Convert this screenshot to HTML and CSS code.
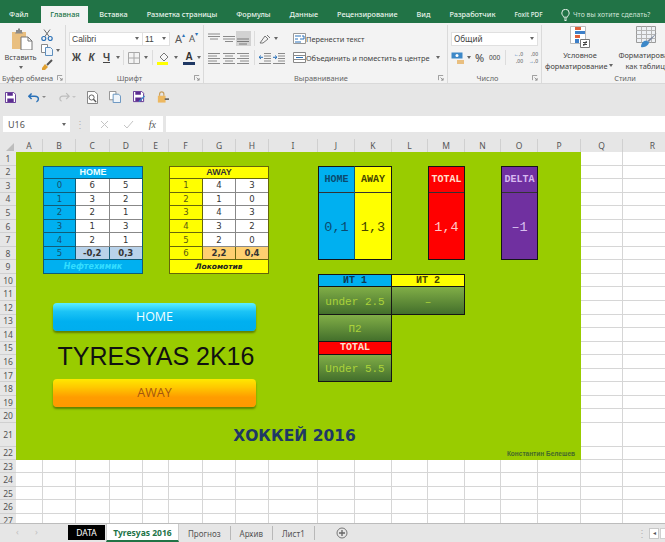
FILE: index.html
```html
<!DOCTYPE html>
<html lang="ru">
<head>
<meta charset="utf-8">
<title>Tyresyas 2016</title>
<link rel="stylesheet" href="styles.css">
</head>
<body>
<svg class="defs" aria-hidden="true">
  <symbol id="al-top" viewBox="0 0 14 14"><path d="M1 2h12M1 4.500h12M3 7h8" stroke="#8a8a8a" fill="none"/></symbol>
  <symbol id="al-mid" viewBox="0 0 14 14"><path d="M1 4.500h12M1 7h12M3 9.500h8" stroke="#8a8a8a" fill="none"/></symbol>
  <symbol id="al-bot" viewBox="0 0 14 14"><path d="M1 7h12M1 9.500h12M3 12h8" stroke="#7a7a7a" fill="none"/></symbol>
  <symbol id="al-l" viewBox="0 0 14 14"><path d="M1 2.500h12M1 5h9M1 7.500h12M1 10h9M1 12.500h12" stroke="#8a8a8a" fill="none"/></symbol>
  <symbol id="al-c" viewBox="0 0 14 14"><path d="M1 2.500h12M3 5h8M1 7.500h12M3 10h8M1 12.500h12" stroke="#8a8a8a" fill="none"/></symbol>
  <symbol id="al-r" viewBox="0 0 14 14"><path d="M1 2.500h12M4 5h9M1 7.500h12M4 10h9M1 12.500h12" stroke="#8a8a8a" fill="none"/></symbol>
  <symbol id="launch" viewBox="0 0 7 7"><path d="M.5 6V.5H6M3 3l3 3M6 3.500V6H3.500" stroke="#8a8a8a" fill="none"/></symbol>
</svg>

<header class="titlebar">
  <span class="tab">Файл</span>
  <span class="tab active">Главная</span>
  <span class="tab">Вставка</span>
  <span class="tab">Разметка страницы</span>
  <span class="tab">Формулы</span>
  <span class="tab">Данные</span>
  <span class="tab">Рецензирование</span>
  <span class="tab">Вид</span>
  <span class="tab">Разработчик</span>
  <span class="tab foxit">Foxit PDF</span>
  <span class="tab tell">
    <svg width="9" height="12" viewBox="0 0 9 12"><path d="M2.700 8.200C2.400 6.800.8 6 .8 4A3.700 3.700 0 0 1 8.200 4c0 2-1.600 2.800-1.900 4.200zM3 10h3M3.500 11.500h2" fill="none" stroke="#e8f3ec"/></svg>
    Что вы хотите сделать?
  </span>
</header>

<section class="ribbon">
  <div class="group g-clip">
    <div class="body clip-body">
      <div class="paste">
        <svg width="22" height="22" viewBox="0 0 22 22"><path d="M1 4h14v17H1z" fill="#e9bf80"/><path d="M5 4V2h2V.5h2V2h2v2l1 1.500H4z" fill="#8a8a8a"/><path d="M10 9h7l4 4v9H10z" fill="#fff" stroke="#777"/><path d="M17 9v4h4" fill="none" stroke="#777"/></svg>
        <span class="paste-text">Вставить</span>
        <span class="caret"></span>
      </div>
      <div class="clip-tools">
        <svg width="12" height="12" viewBox="0 0 12 12"><path d="M3 .5l5.500 7.500M9 .5L3.500 8" stroke="#6d6d6d" fill="none"/><circle cx="2.800" cy="9.500" r="2" fill="none" stroke="#2a71b8" stroke-width="1.200"/><circle cx="9.200" cy="9.500" r="2" fill="none" stroke="#2a71b8" stroke-width="1.200"/></svg>
        <span class="row-i"><svg width="12" height="12" viewBox="0 0 12 12"><path d="M.5.500h6v8h-6z" fill="#fff" stroke="#8a8a8a"/><path d="M4.500 3.500h5l2 2v6h-7z" fill="#eef4fa" stroke="#5f8fbd"/></svg><span class="caret"></span></span>
        <svg width="12" height="12" viewBox="0 0 12 12"><path d="M6 6l5-5" stroke="#555" stroke-width="2"/><path d="M1 9l3-4 3 3-3 3H1z" fill="#e0a030"/></svg>
      </div>
    </div>
    <div class="label label-clip"><span>Буфер обмена</span><svg class="launch"><use href="#launch"/></svg></div>
  </div>

  <div class="group g-font">
    <div class="body">
      <div class="line">
        <span class="combo combo-font">Calibri<span class="caret"></span></span>
        <span class="combo combo-size">11<span class="caret"></span></span>
        <span class="grow-a">A<sup>▴</sup></span>
        <span class="grow-a small">A<sup>▾</sup></span>
      </div>
      <div class="line line-2">
        <b class="fmt">Ж</b><b class="fmt italic">К</b><b class="fmt under">Ч</b><span class="caret"></span>
        <span class="sep sep-a"></span>
        <svg class="ico-b" width="12" height="12" viewBox="0 0 12 12"><path d="M.5.500h11v11H.500zM6 .5v11M.5 6h11" fill="none" stroke="#a8a8a8"/></svg><span class="caret"></span>
        <span class="sep sep-b"></span>
        <svg class="ico-f" width="13" height="14" viewBox="0 0 13 14"><path d="M3 6l4-4 4 4-4 4z" fill="#f7f7f7" stroke="#777"/><path d="M0 11h11v3H0z" fill="#ffff00"/></svg><span class="caret"></span>
        <span class="font-a">A</span><span class="caret"></span>
      </div>
    </div>
    <div class="label label-font"><span>Шрифт</span><svg class="launch"><use href="#launch"/></svg></div>
  </div>

  <div class="group g-align">
    <div class="body align-body">
      <div class="align-left">
        <div class="line">
          <svg class="al"><use href="#al-top"/></svg><svg class="al"><use href="#al-mid"/></svg><span class="al-on"><svg class="al"><use href="#al-bot"/></svg></span>
          <span class="sep sep-c"></span>
          <svg class="al" viewBox="0 0 14 14"><path d="M2 11l5-7 3 3-5 4zM9 3l3 3" fill="none" stroke="#777"/></svg><span class="caret"></span>
        </div>
        <div class="line line-2">
          <svg class="al"><use href="#al-l"/></svg><svg class="al"><use href="#al-c"/></svg><svg class="al"><use href="#al-r"/></svg>
          <span class="sep sep-c"></span>
          <svg class="al" viewBox="0 0 14 14"><path d="M6 2.500h7M6 5h7M6 7.500h7M6 10h7M1 12.500h12" stroke="#8a8a8a" fill="none"/><path d="M5 6.300H1M3 4.500L1 6.300 3 8" stroke="#2a71b8" fill="none"/></svg>
          <svg class="al" viewBox="0 0 14 14"><path d="M6 2.500h7M6 5h7M6 7.500h7M6 10h7M1 12.500h12" stroke="#8a8a8a" fill="none"/><path d="M1 6.300h4M3 4.500l2 1.800L3 8" stroke="#2a71b8" fill="none"/></svg>
        </div>
      </div>
      <div class="align-right">
        <div class="line wide">
          <svg width="13" height="13" viewBox="0 0 13 13"><path d="M.5 1.500h12v10H.5z" fill="#fff" stroke="#999"/><path d="M2 4h6M2 7h3M2 10h6" stroke="#2a71b8"/><path d="M9 4h2v3H7" fill="none" stroke="#2a71b8"/></svg>
          <span>Перенести текст</span>
        </div>
        <div class="line wide line-2">
          <svg width="13" height="13" viewBox="0 0 13 13"><path d="M.5 1.500h12v10H.5zM.5 4.500h12M.5 8.500h12" fill="#fff" stroke="#888"/><path d="M3 6.500h7" stroke="#2a71b8"/></svg>
          <span>Объединить и поместить в центре</span><span class="caret caret-merge"></span>
        </div>
      </div>
    </div>
    <div class="label label-align"><span>Выравнивание</span><svg class="launch"><use href="#launch"/></svg></div>
  </div>

  <div class="group g-num">
    <div class="body">
      <div class="line"><span class="combo combo-num">Общий<span class="caret"></span></span></div>
      <div class="line line-2 num-row">
        <svg width="14" height="14" viewBox="0 0 14 14"><path d="M.5 1.500h11v6H.5z" fill="#3d88c8"/><circle cx="6" cy="4.500" r="1.500" fill="#fff"/><path d="M6 9h7v4H6z" fill="#e9bf80"/></svg><span class="caret"></span>
        <span class="pct">%</span><span class="thou">000</span>
        <span class="sep sep-d"></span>
        <span class="dec"><i>←</i>,0<br>,00</span>
        <span class="dec">,00<br><i>→</i>,0</span>
      </div>
    </div>
    <div class="label label-num"><span>Число</span><svg class="launch"><use href="#launch"/></svg></div>
  </div>

  <div class="group g-style">
    <div class="body style-body">
      <div class="big big-cond">
        <svg width="20" height="22" viewBox="0 0 20 22"><path d="M.5.500h15v17H.5z" fill="#fff" stroke="#bbb"/><path d="M5 1h6v3H5z" fill="#e0603a"/><path d="M5 5h10v3H5z" fill="#3d7fc8"/><path d="M5 9h5v3H5z" fill="#e0603a"/><path d="M5 13h4v4H5z" fill="#3d7fc8"/><path d="M10.500 13.500h9v8h-9z" fill="#fff" stroke="#777"/><path d="M13 18.500h4M13 16.500h4M16.500 15l-3 5" stroke="#444" fill="none"/></svg>
        <span class="big-t">Условное</span>
        <span class="big-t">форматирование<span class="caret caret-inline"></span></span>
      </div>
      <div class="big big-table">
        <svg width="22" height="22" viewBox="0 0 22 22"><path d="M.5.500h19v16H.5z" fill="#eef1f5" stroke="#9a9a9a"/><path d="M.5 4.500h19M.5 8.500h19M.5 12.500h19M5.500.5v16M10.500.5v16M15.500.5v16" stroke="#b5b5b5" fill="none"/><path d="M21 7l-8 9-2-1z" fill="#7d8aa0"/><path d="M5 21c0-4 3-7 6-6l2 1c0 3-4 6-8 5z" fill="#3d88c8"/></svg>
        <span class="big-t">Форматировать</span>
        <span class="big-t">как таблицу</span>
      </div>
    </div>
    <div class="label label-style"><span>Стили</span></div>
  </div>
</section>

<section class="qat">
  <svg width="11" height="11" viewBox="0 0 12 12"><path d="M.5.500h9l2 2v9H.5z" fill="#fff" stroke="#5c2d91"/><path d="M2.500 1h6v3h-6zM2.500 7h7v4h-7z" fill="#5c2d91"/></svg>
  <span class="q-undo"><svg width="12" height="11" viewBox="0 0 15 12"><path d="M4.500 1L1 4.500 4.500 8M1.500 4.500h7c3 0 4.500 2 4.500 3.500s-1 3-2.500 3.500" fill="none" stroke="#2a71b8" stroke-width="1.800"/></svg><span class="caret caret-q"></span></span>
  <span class="q-redo"><svg width="11" height="10" viewBox="0 0 13 11"><path d="M8.500 1L12 4.500 8.500 8M11.500 4.500h-7C2 4.500 1 6.500 1 8s1 2 2 2.500" fill="none" stroke="#bdbdbd" stroke-width="1.400"/></svg><span class="caret caret-q caret-pale"></span></span>
  <svg class="q-prev" width="11" height="13" viewBox="0 0 12 14"><path d="M.5.500h8l3 3v10H.5z" fill="#fff" stroke="#777"/><circle cx="5" cy="7" r="2.800" fill="none" stroke="#555"/><path d="M7 9l3 3" stroke="#555" stroke-width="1.500"/></svg>
  <svg class="q-copy" width="12" height="12" viewBox="0 0 13 13"><path d="M.5.500h7v9h-7z" fill="#fff" stroke="#8a8a8a"/><path d="M4.500 3.500h6l2 2v7h-8z" fill="#eef4fa" stroke="#5f8fbd"/></svg>
  <svg class="q-saveas" width="12" height="12" viewBox="0 0 13 13"><path d="M.5.500h9l2 2v9H.5z" fill="#fff" stroke="#5c2d91"/><path d="M2.500 1h6v3h-6zM2.500 7h7v4h-7z" fill="#5c2d91"/><path d="M6 11l6-6 1 1-6 6z" fill="#3d88c8"/></svg>
  <svg class="q-lock" width="12" height="12" viewBox="0 0 14 13"><path d="M1 5h9v8H1z" fill="#edb860"/><path d="M3 5V3a2.500 2.500 0 0 1 5 0v2" fill="none" stroke="#c8a060" stroke-width="1.400"/><path d="M9 9h5" stroke="#666" stroke-width="2"/></svg>
</section>

<section class="fbar">
  <div class="namebox"><span>U16</span><span class="caret"></span></div>
  <span class="fdots">⋮</span>
  <div class="fbtns">
    <svg width="9" height="9" viewBox="0 0 9 9"><path d="M1 1l7 7M8 1L1 8" stroke="#c4c4c4" fill="none"/></svg>
    <svg width="11" height="9" viewBox="0 0 11 9"><path d="M1 5l3 3 6-7" stroke="#c4c4c4" fill="none"/></svg>
    <i class="fx">fx</i>
  </div>
  <div class="finput"></div>
</section>

<main class="sheet">
  <div class="gl-v"><i></i><i></i><i></i><i></i><i></i><i></i><i></i><i></i><i></i><i></i><i></i><i></i><i></i><i></i><i></i><i></i><i></i><i></i></div>
  <div class="gl-h"><i></i><i></i><i></i><i></i><i></i><i></i><i></i><i></i><i></i><i></i><i></i><i></i><i></i><i></i><i></i><i></i><i></i><i></i><i></i><i></i><i></i><i></i><i></i><i></i><i></i><i></i><i></i></div>

  <div class="corner"><span></span></div>
  <div class="cols"><span>A</span><span>B</span><span>C</span><span>D</span><span>E</span><span>F</span><span>G</span><span>H</span><span>I</span><span>J</span><span>K</span><span>L</span><span>M</span><span>N</span><span>O</span><span>P</span><span>Q</span><span>R</span></div>
  <div class="rows"><span>1</span><span>2</span><span>3</span><span>4</span><span>5</span><span>6</span><span>7</span><span>8</span><span>9</span><span>10</span><span>11</span><span>12</span><span>13</span><span>14</span><span>15</span><span>16</span><span>17</span><span>18</span><span>19</span><span>20</span><span>21</span><span>22</span><span>23</span><span>24</span><span>25</span><span>26</span><span>27</span></div>

  <div class="field"></div>

  <div class="tbl tbl-home">
    <div class="th">HOME</div>
    <div class="k">0</div><div class="v">6</div><div class="v">5</div>
    <div class="k">1</div><div class="v">3</div><div class="v">2</div>
    <div class="k">2</div><div class="v">2</div><div class="v">1</div>
    <div class="k">3</div><div class="v">1</div><div class="v">3</div>
    <div class="k">4</div><div class="v">2</div><div class="v">1</div>
    <div class="k">5</div><div class="s">-0,2</div><div class="s">0,3</div>
    <div class="tf">Нефтехимик</div>
  </div>

  <div class="tbl tbl-away">
    <div class="th">AWAY</div>
    <div class="k">1</div><div class="v">4</div><div class="v">3</div>
    <div class="k">2</div><div class="v">1</div><div class="v">0</div>
    <div class="k">3</div><div class="v">4</div><div class="v">3</div>
    <div class="k">4</div><div class="v">3</div><div class="v">2</div>
    <div class="k">5</div><div class="v">2</div><div class="v">0</div>
    <div class="k">6</div><div class="s">2,2</div><div class="s">0,4</div>
    <div class="tf">Локомотив</div>
  </div>

  <div class="stat st-home"><div class="st-h">HOME</div><div class="st-v">0,1</div></div>
  <div class="stat st-away"><div class="st-h">AWAY</div><div class="st-v">1,3</div></div>
  <div class="stat st-total"><div class="st-h">TOTAL</div><div class="st-v">1,4</div></div>
  <div class="stat st-delta"><div class="st-h">DELTA</div><div class="st-v">–1</div></div>

  <div class="pick hd-blue p-it1">ИТ 1</div>
  <div class="pick hd-yellow p-it2">ИТ 2</div>
  <div class="pick res p-under">under 2.5</div>
  <div class="pick res p-dash">–</div>
  <div class="pick res p-p2">П2</div>
  <div class="pick hd-red p-total">TOTAL</div>
  <div class="pick res p-over">Under 5.5</div>

  <div class="hockey">ХОККЕЙ 2016</div>
  <div class="author">Константин Белешев</div>

  <div class="shape btn-home">HOME</div>
  <div class="shape brand">TYRESYAS 2K16</div>
  <div class="shape btn-away">AWAY</div>
</main>

<footer class="tabsbar">
  <span class="nav">‹</span><span class="nav">›</span>
  <span class="st st-data">DATA</span>
  <span class="st st-on">Tyresyas 2016</span>
  <span class="st">Прогноз</span>
  <span class="st">Архив</span>
  <span class="st">Лист1</span>
  <svg class="plus" width="12" height="12" viewBox="0 0 12 12"><circle cx="6" cy="6" r="5" fill="none" stroke="#777"/><path d="M3 6h6M6 3v6" stroke="#666" stroke-width="1.300"/></svg>
  <span class="tab-end">
    <span class="fdots">⋮</span>
    <span class="hscroll">◂</span>
    <span class="hthumb"></span>
  </span>
</footer>
</body>
</html>
```

FILE: styles.css
```css
* { box-sizing: border-box; }
html, body { margin: 0; width: 665px; height: 542px; overflow: hidden; }
body {
  display: flex;
  flex-direction: column;
  font-family: "Noto Sans", "Open Sans", sans-serif;
  font-size: 7.400px;
  color: #444;
  background: #e6e6e6;
}
.defs { width: 0; height: 0; position: absolute; }

/* title bar */
.titlebar {
  height: 23px;
  flex: none;
  background: #217346;
  display: flex;
  align-items: flex-end;
  white-space: nowrap;
  overflow: hidden;
}
.tab { height: 17px; line-height: 17px; color: #e8f3ec; padding: 0 9.500px; font-weight: 500; font-size: 7.300px; }
.tab:first-child { padding: 0 12px 0 9px; margin-right: 1px; }
.tab.active { background: #f3f3f3; color: #217346; padding: 0 9px; margin-right: 1.500px; width: 47px; }
.foxit { font-size: 6.300px; }
.tell { display: inline-flex; align-items: center; gap: 3px; color: #cfe3d7; padding: 0 0 0 9px; font-size: 6.900px; font-weight: 400; }

/* ribbon */
.ribbon {
  height: 61px;
  flex: none;
  display: flex;
  background: #f3f3f3;
  border-bottom: 1px solid #d9d9d9;
  overflow: hidden;
}
.group {
  display: flex;
  flex-direction: column;
  flex: none;
  border-right: 1px solid #dadada;
  margin-top: 2px;
}
.body { height: 48px; padding: 6px 0 0 3px; }
.label {
  height: 10px;
  line-height: 10px;
  display: flex;
  align-items: center;
  justify-content: center;
  position: relative;
  color: #666;
  white-space: nowrap;
}
.launch { width: 6px; height: 6px; position: absolute; right: 3px; top: 2px; }
.g-clip { width: 66px; }
.g-font { width: 138px; }
.g-align { width: 244px; }
.g-num { width: 94px; }
.g-style { width: 140px; border-right: 0; }
.label-clip { justify-content: flex-start; padding-left: 2px; }
.label-font { padding-right: 10px; }
.label-num { padding-right: 14px; }
.label-style { padding-left: 26px; }
.label-align { justify-content: flex-start; padding-left: 90px; }
.label-clip .launch { right: 2px; }

.line { display: flex; align-items: center; height: 15px; }
.line-2 { margin-top: 4px; }
.caret {
  display: inline-block;
  width: 0;
  height: 0;
  border-left: 2.500px solid transparent;
  border-right: 2.500px solid transparent;
  border-top: 3px solid #666;
  flex: none;
  margin: 0 1.500px;
}
.sep { width: 1px; height: 15px; background: #dcdcdc; flex: none; }

/* clipboard */
.clip-body { display: flex; padding-top: 3px; padding-left: 0; }
.paste { width: 41px; display: flex; flex-direction: column; align-items: center; }
.paste svg { margin-left: 3px; }
.paste-text { line-height: 11px; margin-top: 2px; }
.paste .caret { margin-top: 3px; }
.clip-tools { display: flex; flex-direction: column; gap: 3px; padding-top: 1px; }
.row-i { display: flex; align-items: center; gap: 1px; }

/* font group */
.combo {
  height: 14px;
  background: #fff;
  border: 1px solid #e0e0e0;
  display: flex;
  align-items: center;
  justify-content: space-between;
  padding: 0 2px;
  flex: none;
}
.combo-font { width: 74px; font-family: "Liberation Sans", sans-serif; font-size: 8.500px; }
.combo-size { width: 28px; margin-left: -1px; font-family: "Liberation Sans", sans-serif; font-size: 8.500px; }
.combo-num { width: 87px; font-size: 8.200px; }
.grow-a { font-size: 11px; margin-left: 5px; width: 14px; line-height: 1; color: #555; }
.grow-a sup { font-size: 6px; color: #2a71b8; vertical-align: 6px; line-height: 0; }
.grow-a.small { font-size: 9.500px; margin-left: 0; }
.fmt {
  width: 15px;
  text-align: center;
  font-family: "Liberation Sans", sans-serif;
  font-size: 10px;
  color: #444;
  flex: none;
}
.italic { font-style: italic; }
.under { text-decoration: underline; }
.sep-a { margin: 0 4px 0 2px; }
.sep-b { margin: 0 4px 0 3px; }
.ico-b { margin-right: 2px; }
.ico-f { margin-right: 2px; }
.font-a {
  margin-left: 4px;
  width: 12px;
  text-align: center;
  font: bold 10px/11px "Liberation Sans", sans-serif;
  border-bottom: 3px solid #1f3864;
  color: #333;
  height: 14px;
}

/* alignment */
.align-body { display: flex; }
.align-left { width: 84px; flex: none; }
.al { width: 14px; height: 14px; flex: none; margin-right: .5px; }
.al-on { width: 15px; height: 15px; background: #d2d2d2; display: flex; align-items: center; justify-content: center; }
.sep-c { margin: 0 3px; }
.wide { white-space: nowrap; color: #444; }
.align-right { padding-left: 2px; }
.caret-merge { margin-left: 6px; }

/* number */
.pct { font-size: 11px; margin-left: 3px; width: 13px; }
.thou { font-size: 6.500px; margin-left: 1px; width: 15px; }
.sep-d { margin: 0 3px 0 1px; }
.dec {
  width: 14px;
  font-size: 5px;
  line-height: 7px;
  color: #555;
  text-align: right;
  margin-right: 1px;
  white-space: nowrap;
}
.dec i { font-style: normal; color: #2a71b8; }

/* styles */
.style-body { display: flex; padding: 1px 0 0; }
.big {
  width: 72px;
  display: flex;
  flex-direction: column;
  align-items: center;
  flex: none;
  line-height: 11px;
  white-space: nowrap;
}
.big-cond { margin-left: 2px; }
.big-table { width: 68px; margin-left: -3px; }
.big svg { margin-bottom: 2px; }
.big-t { display: block; }
.caret-inline { margin-left: 2px; vertical-align: 2px; }

/* quick access */
.qat {
  height: 26px;
  flex: none;
  display: flex;
  align-items: center;
  padding-left: 5px;
  background: #e6e6e6;
}
.q-undo { display: flex; align-items: center; margin-left: 12px; }
.q-redo { display: flex; align-items: center; margin-left: 11px; }
.caret-q { border-left-width: 2px; border-right-width: 2px; border-top: 2px solid #888; margin-left: 2px; }
.caret-pale { border-top-color: #c4c4c4; }
.q-prev { margin-left: 10px; }
.q-copy { margin-left: 11px; }
.q-saveas { margin-left: 12px; }
.q-lock { margin-left: 12px; }

/* formula bar */
.fbar {
  height: 29px;
  flex: none;
  display: flex;
  align-items: flex-start;
  padding: 6px 0 0 3px;
  background: #e6e6e6;
}
.namebox {
  width: 67px;
  height: 16px;
  background: #fff;
  display: flex;
  align-items: center;
  justify-content: space-between;
  padding: 0 3px 0 5px;
  color: #555;
  font-size: 9px;
}
.fdots { color: #b5b5b5; width: 20px; text-align: center; line-height: 16px; font-size: 10px; }
.fbtns {
  width: 73px;
  height: 16px;
  background: #fff;
  display: flex;
  align-items: center;
  justify-content: space-around;
  padding-left: 3px;
  margin-right: 3px;
}
.fx { font: italic 10px "Liberation Serif", serif; color: #555; }
.finput { flex: 1; height: 16px; background: #fff; }

/* sheet */
.sheet {
  flex: 1;
  min-height: 0;
  position: relative;
  overflow: hidden;
  background: #fff;
  display: grid;
  grid-template-columns: 16px 27px 33px 33.500px 33.500px 26px 34px 33px 33px 49px 37px 37px 36px 37px 36px 37px 43px 42px 60px;
  grid-template-rows: 13px repeat(20, 13.550px) 24px 13px repeat(5, 13.500px);
  justify-content: start;
  align-content: start;
  font-family: "DejaVu Sans", sans-serif;
}
.gl-v {
  grid-column: 2 / 20;
  grid-row: 1 / -1;
  display: grid;
  grid-template-columns: subgrid;
}
.gl-v i { border-right: 1px solid #d6d6d6; }
.gl-h {
  grid-column: 1 / -1;
  grid-row: 2 / -1;
  display: grid;
  grid-template-rows: subgrid;
}
.gl-h i { border-bottom: 1px solid #d6d6d6; }

.corner { grid-column: 1; grid-row: 1; background: #e6e6e6; }
.corner span {
  display: block;
  width: 0;
  height: 0;
  margin: 4px 0 0 6px;
  border-left: 8px solid transparent;
  border-bottom: 8px solid #bdbdbd;
}
.cols {
  grid-column: 2 / 20;
  grid-row: 1;
  display: grid;
  grid-template-columns: subgrid;
  background: #e6e6e6;
}
.cols span {
  text-align: center;
  line-height: 13px;
  font-family: "Noto Sans", sans-serif;
  font-size: 8.500px;
  color: #555;
  border-right: 1px solid #d0d0d0;
  margin-bottom: 1px;
}
.rows {
  grid-column: 1;
  grid-row: 2 / -1;
  display: grid;
  grid-template-rows: subgrid;
  background: #e6e6e6;
}
.rows span {
  font-family: "Noto Sans", sans-serif;
  font-size: 8.500px;
  color: #555;
  border-bottom: 1px solid #d0d0d0;
  line-height: 13px;
  display: flex;
  align-items: center;
  justify-content: center;
}
.field { grid-column: 2 / 18; grid-row: 2 / 24; background: #99cc00; }

/* tables */
.tbl {
  display: grid;
  grid-template-columns: subgrid;
  grid-template-rows: subgrid;
  grid-row: 3 / 11;
  border: 1px solid var(--line);
  font-size: 8.500px;
  color: #333;
}
.tbl-home { grid-column: 3 / 6; --line: #0f5c78; --head: #00b0f0; --sum: #b8d2ea; }
.tbl-away { grid-column: 7 / 10; --line: #66660a; --head: #ffff00; --sum: #ffd070; }
.tbl > div {
  display: flex;
  align-items: center;
  justify-content: center;
  border-right: 1px solid var(--line);
  border-bottom: 1px solid var(--line);
}
.tbl > .th {
  grid-column: 1 / -1;
  background: var(--head);
  font: bold 9px "Liberation Sans", sans-serif;
  border-right: 0;
}
.tbl-home > .th { color: #eaffff; }
.tbl-away > .th { color: #333; }
.k { background: var(--head); }
.tbl-home .k { color: #14506c; }
.tbl-away .k { color: #5a5a10; }
.v { background: #fff; border-color: #888 !important; }
.s { background: var(--sum); font-weight: bold; }
.tbl > div:nth-child(3n+1):not(.tf) { border-right: 0; }
.tbl > .tf {
  grid-column: 1 / -1;
  background: var(--head);
  font: italic bold 8px "DejaVu Sans", sans-serif;
  border: 0;
}
.tbl-home > .tf { color: #33ddff; }
.tbl-away > .tf { color: #222; font-size: 7.500px; }

/* stat boxes */
.stat {
  grid-row: 3 / 10;
  display: grid;
  grid-template-rows: subgrid;
  border: 1px solid #151515;
  font-family: "Liberation Mono", monospace;
}
.st-h {
  grid-row: 1 / 3;
  display: flex;
  align-items: center;
  justify-content: center;
  font-weight: bold;
  font-size: 10px;
  border-bottom: 1px solid #333;
}
.st-v {
  grid-row: 3 / 8;
  display: flex;
  align-items: center;
  justify-content: center;
  font-size: 13.500px;
  padding-top: 2px;
}
.st-home { grid-column: 11; background: #00b0f0; color: #0b4a6e; border-right-color: #0b5c7e; }
.st-away { grid-column: 12; background: #ffff00; color: #444400; border-left: 0; }
.st-total { grid-column: 14; background: #ff0000; color: #ffc8c8; }
.st-total .st-h { color: #ffe0d0; }
.st-delta { grid-column: 16; background: #7030a0; color: #d8b8f0; }
.st-delta .st-v { color: #d8c0f0; }

/* picks */
.pick {
  display: flex;
  align-items: center;
  justify-content: center;
  border: 1px solid #151515;
  font-family: "Liberation Mono", monospace;
}
.hd-blue, .hd-yellow, .hd-red { font-size: 10px; font-weight: bold; }
.hd-blue { background: #00b0f0; color: #0f3a52; }
.hd-yellow { background: #ffff00; color: #444400; }
.hd-red { background: #ff0000; color: #ffe0d0; }
.res {
  background: linear-gradient(#81ae47, #436f2b);
  color: #abd23a;
  font-size: 11px;
  padding-top: 2px;
}
.p-it1 { grid-column: 11 / 13; grid-row: 11; }
.p-it2 { grid-column: 13 / 15; grid-row: 11; border-left: 0; }
.p-under { grid-column: 11 / 13; grid-row: 12 / 14; border-top: 0; }
.p-dash { grid-column: 13 / 15; grid-row: 12 / 14; border-top: 0; border-left: 0; }
.p-p2 { grid-column: 11 / 13; grid-row: 14 / 16; border-top: 0; }
.p-total { grid-column: 11 / 13; grid-row: 16; border-top: 0; }
.p-over { grid-column: 11 / 13; grid-row: 17 / 19; border-top: 0; }

.hockey {
  grid-column: 2 / 18;
  grid-row: 22;
  display: flex;
  align-items: center;
  justify-content: center;
  padding: 2px 8px 0 0;
  font: bold 15.500px "DejaVu Sans", sans-serif;
  color: #1f3864;
}
.author {
  grid-column: 2 / 18;
  grid-row: 23;
  text-align: right;
  padding-right: 6px;
  font: bold 6.500px/13px "Liberation Sans", sans-serif;
  color: #44692a;
}

/* floating shapes over the grid */
.shape { position: absolute; left: 53px; width: 203px; text-align: center; }
.btn-home, .btn-away {
  height: 28px;
  border-radius: 4px;
  font: 12.500px/28px "Open Sans", sans-serif;
  box-shadow: 0 2px 2px rgba(50, 70, 0, .55);
}
.btn-home {
  top: 164px;
  background: linear-gradient(#5ef0ff 0, #1cc4f6 30%, #00b0f0 65%, #00aeee 100%);
  color: #f2ffff;
}
.btn-away {
  top: 240px;
  background: linear-gradient(#ffe800 0, #ffc800 30%, #ff9c00 65%, #ff9900 100%);
  color: #a4560f;
}
.brand {
  top: 203px;
  padding-left: 3px;
  font: 25px/28px "Liberation Sans", sans-serif;
  color: #111;
  white-space: nowrap;
}

/* sheet tabs */
.tabsbar {
  height: 19px;
  flex: none;
  display: flex;
  align-items: stretch;
  background: #e6e6e6;
  border-top: 1px solid #bcbcbc;
  color: #555;
  white-space: nowrap;
}
.nav { width: 19px; text-align: center; line-height: 16px; color: #c0c0c0; font-size: 9px; }
.nav:first-child { margin-left: 8px; }
.nav + .nav { margin-right: 22px; }
.st {
  padding: 0 9px;
  font-size: 8px;
  border-right: 1px solid #b8b8b8;
  margin: 2px 0;
  display: flex;
  align-items: center;
}
.st-data { background: #000; color: #fff; width: 37px; padding: 0; justify-content: center; margin: 1px 1px 2px 0; border: 0; font-size: 8.500px; }
.st-on {
  background: #fff;
  color: #217346;
  font-weight: bold;
  margin: 0;
  padding: 0;
  width: 73px;
  justify-content: center;
  border-bottom: 2px solid #217346;
  border-right: 1px solid #ccc;
  border-left: 1px solid #ccc;
  font-size: 8.500px;
}
.plus { margin: 3px 0 0 21px; }
.tab-end { margin-left: auto; display: flex; align-items: center; gap: 1px; }
.tab-end .fdots { width: 12px; }
.hscroll {
  width: 10px;
  height: 11px;
  background: #fff;
  border: 1px solid #c8c8c8;
  font-size: 6px;
  line-height: 9px;
  text-align: center;
}
.hthumb { width: 5px; height: 11px; background: #fff; border: 1px solid #d0d0d0; border-right: 0; }
```
